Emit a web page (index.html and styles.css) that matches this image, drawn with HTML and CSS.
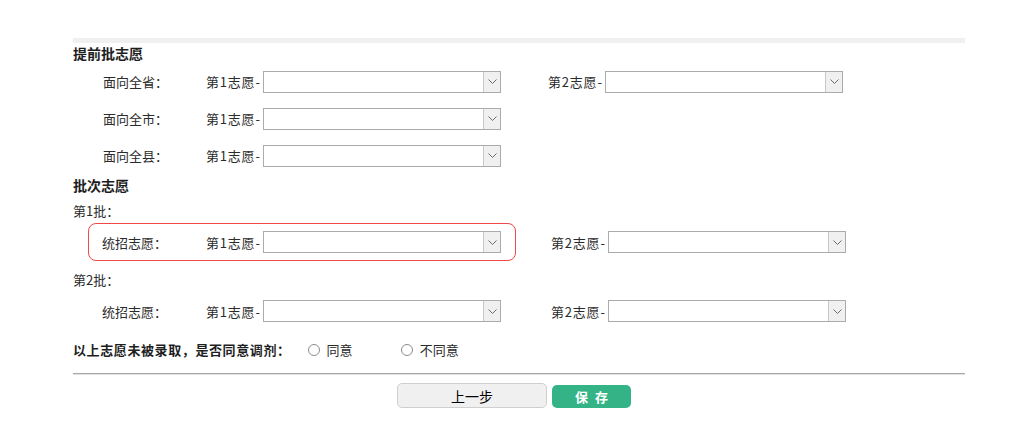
FILE: index.html
```html
<!DOCTYPE html>
<html lang="zh-CN">
<head>
    <meta charset="UTF-8">
    <meta name="viewport" content="width=device-width, initial-scale=1.0">
    <title>填报志愿</title>
    <link rel="stylesheet" href="styles.css">
</head>
<body>
    <div class="wrap">
        <div class="topbar"></div>

        <div class="title">提前批志愿</div>
        <div class="row">
            <span class="lbl">面向全省：</span>
            <span class="pick"><span class="pt">第1志愿-</span><span class="sel"><select></select><span class="arrow"><svg width="9" height="5" viewBox="0 0 9 5"><path d="M0.5 0.5 L4.5 4.5 L8.5 0.5" fill="none" stroke="#6b6b6b" stroke-width="1"/></svg></span></span></span>
            <span class="pick second"><span class="pt">第2志愿-</span><span class="sel"><select></select><span class="arrow"><svg width="9" height="5" viewBox="0 0 9 5"><path d="M0.5 0.5 L4.5 4.5 L8.5 0.5" fill="none" stroke="#6b6b6b" stroke-width="1"/></svg></span></span></span>
        </div>
        <div class="row">
            <span class="lbl">面向全市：</span>
            <span class="pick"><span class="pt">第1志愿-</span><span class="sel"><select></select><span class="arrow"><svg width="9" height="5" viewBox="0 0 9 5"><path d="M0.5 0.5 L4.5 4.5 L8.5 0.5" fill="none" stroke="#6b6b6b" stroke-width="1"/></svg></span></span></span>
        </div>
        <div class="row">
            <span class="lbl">面向全县：</span>
            <span class="pick"><span class="pt">第1志愿-</span><span class="sel"><select></select><span class="arrow"><svg width="9" height="5" viewBox="0 0 9 5"><path d="M0.5 0.5 L4.5 4.5 L8.5 0.5" fill="none" stroke="#6b6b6b" stroke-width="1"/></svg></span></span></span>
        </div>

        <div class="title">批次志愿</div>
        <div class="batch">第1批：</div>
        <div class="bline">
            <div class="brow hl">
                <span class="lbl">统招志愿：</span>
                <span class="pick"><span class="pt">第1志愿-</span><span class="sel"><select></select><span class="arrow"><svg width="9" height="5" viewBox="0 0 9 5"><path d="M0.5 0.5 L4.5 4.5 L8.5 0.5" fill="none" stroke="#6b6b6b" stroke-width="1"/></svg></span></span></span>
            </div>
            <div class="brow-out">
                <span class="pick"><span class="pt">第2志愿-</span><span class="sel"><select></select><span class="arrow"><svg width="9" height="5" viewBox="0 0 9 5"><path d="M0.5 0.5 L4.5 4.5 L8.5 0.5" fill="none" stroke="#6b6b6b" stroke-width="1"/></svg></span></span></span>
            </div>
        </div>
        <div class="batch b2">第2批：</div>
        <div class="bline">
            <div class="brow">
                <span class="lbl">统招志愿：</span>
                <span class="pick"><span class="pt">第1志愿-</span><span class="sel"><select></select><span class="arrow"><svg width="9" height="5" viewBox="0 0 9 5"><path d="M0.5 0.5 L4.5 4.5 L8.5 0.5" fill="none" stroke="#6b6b6b" stroke-width="1"/></svg></span></span></span>
            </div>
            <div class="brow-out">
                <span class="pick"><span class="pt">第2志愿-</span><span class="sel"><select></select><span class="arrow"><svg width="9" height="5" viewBox="0 0 9 5"><path d="M0.5 0.5 L4.5 4.5 L8.5 0.5" fill="none" stroke="#6b6b6b" stroke-width="1"/></svg></span></span></span>
            </div>
        </div>

        <div class="ask">
            <span class="ask-q">以上志愿未被录取，是否同意调剂：</span>
            <label class="opt"><input type="radio" name="tj">同意</label>
            <label class="opt"><input type="radio" name="tj">不同意</label>
        </div>

        <div class="line"></div>

        <div class="btns">
            <button class="btn prev">上一步</button>
            <button class="btn save">保存</button>
        </div>
    </div>
</body>
</html>
```

FILE: styles.css
```css
body {
    margin: 0;
    font-family: "Noto Sans CJK SC", "Liberation Sans", sans-serif;
    font-size: 13px;
    color: #2b2b2b;
    background: #fff;
}
.wrap {
    width: 892px;
    padding: 38px 0 0 73px;
}
.topbar {
    height: 5px;
    background: #f0f0f0;
}
.title {
    font-size: 14px;
    font-weight: bold;
    color: #1e1e1e;
    line-height: 20px;
}
.title + .batch {
    margin-top: 4px;
}
.row {
    display: flex;
    align-items: center;
    height: 37px;
    padding-left: 30px;
}
.title ~ .title {
    line-height: 22px;
}
.lbl {
    width: 103px;
    flex: none;
}
.pick {
    display: flex;
    align-items: center;
}
.pt {
    width: 57px;
    letter-spacing: 0.8px;
    white-space: nowrap;
}
.row .second {
    margin-left: 47px;
}
.sel {
    display: flex;
    width: 236px;
    height: 20px;
    border: 1px solid #ababab;
    background: #fff;
}
.sel select {
    flex: 1;
    border: 0;
    margin: 0;
    padding: 0;
    background: transparent;
    appearance: none;
    -webkit-appearance: none;
    outline: none;
}
.arrow {
    width: 16px;
    border-left: 1px solid #c8c8c8;
    background: #f0f0f0;
    display: flex;
    align-items: center;
    justify-content: center;
}
.batch {
    line-height: 22px;
}
.batch.b2 {
    margin-top: 8px;
}
.bline {
    display: flex;
    align-items: center;
    margin-top: 1px;
}
.brow {
    display: flex;
    align-items: center;
    margin-left: 15px;
    padding: 7px 14px 7px 13px;
    border: 1px solid transparent;
    border-radius: 8px;
}
.brow.hl {
    border-color: #f04848;
}
.brow .lbl {
    width: 104px;
}
.brow-out {
    margin-left: 35px;
}
.ask {
    display: flex;
    align-items: center;
    margin-top: 9px;
    line-height: 22px;
}
.ask-q {
    font-weight: bold;
    color: #1e1e1e;
    letter-spacing: 0.6px;
    margin-right: 17px;
}
.opt {
    display: flex;
    align-items: center;
    margin-right: 48px;
}
.opt input {
    appearance: none;
    -webkit-appearance: none;
    width: 12px;
    height: 12px;
    margin: 0 7px 0 0;
    border: 1px solid #8c8c8c;
    border-radius: 50%;
    background: #fff;
}
.line {
    margin-top: 12px;
    border-top: 1px solid #a8a8a8;
    border-bottom: 1px solid #e2e2e2;
}
.btns {
    display: flex;
    align-items: flex-end;
    justify-content: center;
    gap: 5px;
    padding-right: 10px;
    margin-top: 8px;
}
.btn {
    font-family: inherit;
    cursor: pointer;
    border-radius: 5px;
}
.prev {
    width: 150px;
    height: 25px;
    border: 1px solid #cfcfcf;
    background: #f0f0f0;
    color: #000;
    font-size: 14px;
}
.save {
    width: 79px;
    height: 23px;
    border: 0;
    background: #33b386;
    color: #fff;
    font-size: 13px;
    font-weight: bold;
    letter-spacing: 7px;
    text-indent: 7px;
}
```
